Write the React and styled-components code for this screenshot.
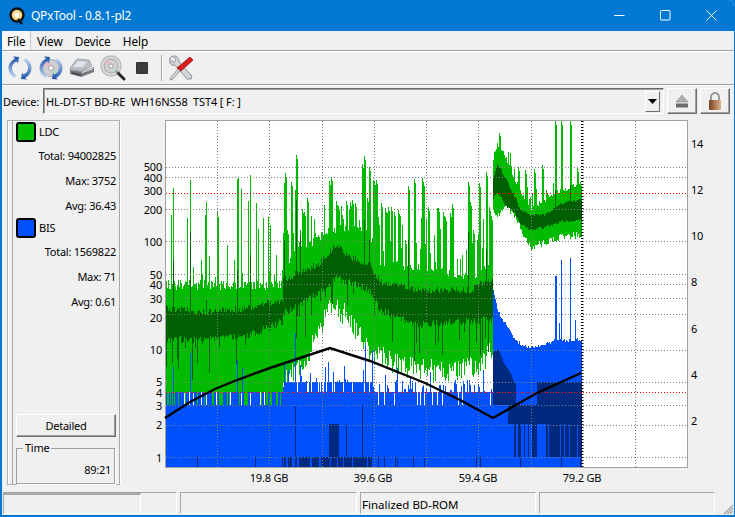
import React from 'react'
import styled, { createGlobalStyle } from 'styled-components'

const UI_FONT = '"Noto Sans", "Open Sans", "Liberation Sans", sans-serif'

const GlobalStyle = createGlobalStyle`
  html, body { margin: 0; padding: 0; background: #0078d4; overflow: hidden; }
  * { box-sizing: border-box; }
`

const Window = styled.div`
  width: 735px;
  height: 517px;
  display: flex;
  flex-direction: column;
  border-style: solid;
  border-color: #0078d4;
  border-width: 0 1px 2px 2px;
  border-top-right-radius: 7px;
  background: #f0f0f0;
  font-family: ${UI_FONT};
  font-size: 11px;
  letter-spacing: -0.25px;
  color: #000;
  overflow: hidden;
`

const TitleBar = styled.div`
  height: 31px;
  margin: 0 -1px 0 -2px;
  flex: none;
  display: flex;
  align-items: center;
  background: #0078d4;
  color: #fff;
  padding-left: 9px;
`

const TitleText = styled.span`
  margin-left: 6px;
  font-size: 12px;
  letter-spacing: -0.25px;
`

const WinButtons = styled.div`
  margin-left: auto;
  margin-right: 1px;
  display: flex;
  height: 100%;
`

const WinButton = styled.div`
  width: 46px;
  display: flex;
  align-items: center;
  justify-content: center;
`

const MenuBar = styled.div`
  height: 20px;
  flex: none;
  display: flex;
  align-items: stretch;
  border-bottom: 1px solid #a0a0a0;
  box-shadow: 0 1px 0 #fff;
`

const MenuItem = styled.div`
  padding: 0 6px 0 ${p => (p.$active ? '5px' : '6px')};
  display: flex;
  align-items: center;
  font-size: 11.8px;
  letter-spacing: -0.05px;
  ${p => p.$active && 'background: #f7f7f7; border-right: 1px solid #c8c8c8; width: 29px;'}
`

const ToolBar = styled.div`
  height: 33px;
  margin-top: 1px;
  flex: none;
  display: flex;
  align-items: center;
  padding-left: 2px;
  border-bottom: 1px solid #a0a0a0;
`

const ToolIcon = styled.div`
  width: ${p => p.$w || 31}px;
  height: 26px;
  flex: none;
  display: flex;
  align-items: center;
  justify-content: center;
`

const ToolSep = styled.div`
  width: 1px;
  height: 26px;
  margin: 0 5px 0 6px;
  background: #a8a8a8;
  box-shadow: 1px 0 0 #fff;
`

const DeviceRow = styled.div`
  height: 35px;
  flex: none;
  display: flex;
  align-items: center;
  padding: 0 2px 3px 1px;
  box-shadow: inset 0 1px 0 #fff;
`

const DeviceLabel = styled.span`
  width: 40px;
  flex: none;
  font-size: 11px;
  letter-spacing: -0.1px;
`

const Combo = styled.div`
  width: 621px;
  height: 26px;
  flex: none;
  display: flex;
  align-items: center;
  justify-content: space-between;
  padding: 0 3px 0 2px;
  border: 1px solid;
  border-color: #6e6e6e #fff #fff #6e6e6e;
  box-shadow: inset 1px 1px 0 #a0a0a0;
  background: #f0f0f0;
  font-size: 11px;
  letter-spacing: -0.13px;
  white-space: pre;
`

const ComboArrow = styled.div`
  width: 15px;
  height: 21px;
  display: flex;
  align-items: center;
  justify-content: center;
  background: #f0f0f0;
  border: 1px solid;
  border-color: #fff #6e6e6e #6e6e6e #fff;
`

const SquareButton = styled.div`
  width: 30px;
  height: 26px;
  margin-left: ${p => p.$gap}px;
  flex: none;
  display: flex;
  align-items: center;
  justify-content: center;
  border: 1px solid;
  border-color: #fff #6e6e6e #6e6e6e #fff;
  box-shadow: inset -1px -1px 0 #a0a0a0;
`

const Main = styled.div`
  flex: 1;
  min-height: 0;
  display: flex;
  padding: 0 0 0 5px;
`

const OuterFrame = styled.div`
  width: 113px;
  height: 365px;
  flex: none;
  padding-left: 4px;
  border: 1px solid #b0b0b0;
  border-right: 0;
  box-shadow: inset 1px 0 0 #fff;
`

const SidePanel = styled.div`
  width: 108px;
  height: 100%;
  display: flex;
  flex-direction: column;
  padding-left: 3px;
  border-left: 1px solid #a8a8a8;
  border-right: 1px solid #a8a8a8;
  box-shadow: 1px 0 0 #fff;
`

const LegendHead = styled.div`
  height: 21px;
  display: flex;
  align-items: center;
  gap: 3px;
`

const Swatch = styled.div`
  width: 20px;
  height: 20px;
  border: 2px solid #000;
  border-radius: 3px;
  background: ${p => p.$color};
`

const StatRow = styled.div`
  height: 25px;
  display: flex;
  align-items: center;
  justify-content: flex-end;
  padding: 1px 3px 0 0;
`

const DetailGroup = styled.div`
  margin-top: auto;
`

const DetailedButton = styled.div`
  width: 100px;
  height: 23px;
  display: flex;
  align-items: center;
  justify-content: center;
  border: 1px solid;
  border-color: #fff #6e6e6e #6e6e6e #fff;
  box-shadow: inset -1px -1px 0 #a0a0a0;
`

const TimeBox = styled.fieldset`
  width: 99px;
  height: 43px;
  margin: 4px 0 0 0;
  padding: 0 3px 0 0;
  display: block;
  border: 1px solid #a0a0a0;
  box-shadow: 1px 1px 0 #fff;
  text-align: right;
  line-height: 16px;
`

const TimeLegend = styled.legend`
  margin-left: 6px;
  padding: 0 2px;
  text-align: left;
  line-height: 14px;
`

const TimeValue = styled.div`
  margin-top: 7px;
`

const ChartHolder = styled.div`
  margin-left: 2px;
  flex: none;
  height: 370px;
`

const StatusBar = styled.div`
  height: 23px;
  margin-top: auto;
  flex: none;
  display: flex;
  gap: 3px;
  padding-left: 1px;
  position: relative;
`

const StatusCell = styled.div`
  width: ${p => p.$w}px;
  height: 22px;
  flex: none;
  display: flex;
  align-items: center;
  padding: 2px 0 0 1px;
  border-top: 1px solid #a8a8a8;
  border-left: 1px solid #a8a8a8;
  border-right: 1px solid #fff;
  border-bottom: 1px solid #fff;
  font-size: 11.5px;
  letter-spacing: 0;
`

const ProgressStrip = styled.div`
  width: 137px;
  height: 21px;
  margin: -2px 0 0 -1px;
  border-top: 2px solid #a8a8a8;
  border-right: 1px solid #fff;
`

const Grip = styled.svg`
  position: absolute;
  right: 0;
  bottom: 0;
`

// ---- chart data, page pixel coordinates read off the graph ----

const lerp = (pts, x) => {
  if (x <= pts[0][0]) return pts[0][1]
  for (let i = 1; i < pts.length; i++) {
    if (x <= pts[i][0]) {
      const [x0, y0] = pts[i - 1]
      const [x1, y1] = pts[i]
      return y0 + ((y1 - y0) * (x - x0)) / (x1 - x0)
    }
  }
  return pts[pts.length - 1][1]
}

const seed = { v: 12345 }
const rnd = () => {
  seed.v = (seed.v * 16807) % 2147483647
  return seed.v / 2147483647
}

const ldcTop = [[166, 284], [280, 284], [283, 262], [320, 236], [340, 228], [370, 232], [378, 262], [420, 266], [470, 276], [492, 266], [493, 158], [497, 143], [505, 155], [513, 175], [520, 190], [530, 208], [540, 202], [560, 190], [581, 184]]
const ldcBottom = [[283, 386], [300, 366], [320, 333], [330, 303], [350, 320], [370, 353], [380, 355], [400, 367], [420, 370], [450, 373], [480, 367], [492, 350], [493, 212], [497, 215], [505, 205], [513, 215], [520, 228], [530, 248], [545, 242], [560, 237], [581, 235]]
const darkTop = [[166, 308], [200, 312], [250, 308], [282, 300], [283, 280], [320, 263], [335, 245], [350, 258], [370, 265], [380, 282], [420, 290], [470, 290], [492, 278], [493, 178], [497, 163], [505, 178], [515, 198], [520, 210], [530, 215], [545, 215], [560, 203], [581, 200]]
const darkBottom = [[166, 340], [200, 340], [250, 335], [282, 322], [283, 313], [320, 293], [335, 278], [350, 282], [370, 292], [380, 310], [420, 325], [470, 320], [492, 320], [493, 198], [497, 192], [505, 205], [515, 214], [520, 223], [530, 230], [545, 227], [560, 222], [581, 220]]
const bisTop = [[166, 392], [282, 392], [284, 382], [372, 382], [374, 392], [492, 392], [493, 290], [497, 310], [503, 320], [510, 332], [515, 340], [525, 347], [545, 345], [555, 340], [581, 340]]

const spikes = [
  [171, 215], [173, 188], [187, 218], [190, 180], [205, 215], [206, 202], [217, 212], [218, 217], [227, 245], [237, 179], [238, 178], [241, 189], [248, 201], [250, 175], [256, 203], [258, 229], [263, 218], [268, 217], [270, 225],
  [284, 183], [285, 173], [287, 230], [291, 182], [296, 155], [295, 190], [302, 209], [304, 212], [307, 198], [315, 233], [329, 181], [331, 177], [336, 201], [338, 206], [342, 215], [346, 201], [350, 202], [352, 200], [355, 203], [362, 164], [364, 156], [367, 198], [369, 167], [373, 180], [374, 181], [376, 180],
  [381, 203], [385, 208], [388, 207], [391, 207], [394, 212], [398, 210], [405, 240], [408, 186], [414, 179], [422, 178], [423, 182], [428, 207], [437, 208], [438, 208], [443, 212], [445, 217], [450, 213], [452, 204], [468, 182], [470, 202], [473, 230], [479, 183], [486, 172], [489, 207], [491, 216],
  [518, 167], [525, 170], [534, 169], [542, 165], [546, 190], [555, 121], [561, 121], [570, 121], [577, 168], [580, 182],
]
const darkSpikes = [[173, 260], [190, 232], [206, 300], [237, 270], [250, 255], [284, 240], [296, 200], [300, 235], [364, 220], [369, 240], [408, 240], [468, 232], [486, 250], [570, 185], [555, 190]]
const blueSpikes = [[173, 367], [190, 353], [237, 360], [242, 368], [284, 363], [288, 370], [295, 333], [300, 365], [328, 362], [365, 345], [372, 350], [385, 375], [397, 368], [410, 378], [430, 372], [455, 380], [483, 370], [555, 276], [556, 276], [559, 323], [561, 260], [570, 258], [575, 320]]
const navyBars = [[296, 457, 467], [284, 457, 467], [329, 424, 457], [330, 424, 457], [331, 424, 457], [332, 424, 457], [333, 424, 457], [334, 424, 457], [335, 424, 457], [336, 424, 457], [337, 424, 457], [338, 424, 457], [295, 405, 457], [362, 405, 457], [346, 424, 457]]

const bar = (x, top, bottom) => (bottom > top ? `M${x} ${top.toFixed(0)}V${bottom.toFixed(0)}` : '')

const buildLayers = () => {
  let green = ''
  let dark = ''
  let blue = ''
  let navy = ''
  const topExtra = new Map()
  // most spikes in the graph are two columns wide
  spikes.forEach(([x, y]) => {
    topExtra.set(x, y)
    if (x > 280 && !topExtra.has(x + 1)) topExtra.set(x + 1, y + 4)
  })
  const darkExtra = new Map(darkSpikes)
  const blueExtra = new Map(blueSpikes)

  for (let x = 166; x <= 581; x++) {
    const x5 = x + 0.5
    const a = lerp(ldcTop, x) + (rnd() - 0.4) * (x < 493 ? 10 : 5)
    let top = a
    if (x < 283 && rnd() < 0.18) top = a - rnd() * 30
    if (x >= 283 && x < 374 && rnd() < 0.22) top = a - rnd() * 28
    if (x >= 374 && x < 493 && rnd() < 0.4) top = a - rnd() * 50
    if (x >= 493 && rnd() < 0.25) top = a - rnd() * 16

    // green ends at the comb on the left, further right it is a jagged band
    const bottom = x < 283
      ? (rnd() < 0.65 ? 405 : 392)
      : lerp(ldcBottom, x) + (rnd() - 0.5) * (x < 493 ? 24 : 7)
    green += bar(x5, topExtra.get(x) ?? top, bottom)

    const dTop = lerp(darkTop, x) + (rnd() - 0.5) * (x < 493 ? 7 : 3)
    const dBottom = lerp(darkBottom, x) + (rnd() - 0.5) * (x < 493 ? 8 : 3) + (x < 493 && rnd() < 0.14 ? rnd() * 40 : 0)
    dark += bar(x5, darkExtra.get(x) ?? dTop, dBottom)

    // blue: solid below 405 on the left, comb up to the red line
    let bTop = lerp(bisTop, x)
    if (x < 284 && rnd() < 0.3) bTop = 405
    if (x >= 284 && x < 493) {
      if (rnd() < 0.15) bTop = x < 374 ? 392 : 405
      else if (rnd() < 0.35) bTop -= rnd() * (x < 374 ? 16 : 12)
      else if (x >= 374 && rnd() < 0.6) bTop = 392
    }
    if (x >= 493) bTop += (rnd() - 0.5) * 4
    blue += bar(x5, blueExtra.get(x) ?? bTop, 467)

    // navy: error clusters behind the layer jump
    if (x >= 493) {
      const nTop = lerp([[493, 352], [498, 349], [503, 362], [510, 373], [514, 382], [533, 405], [536, 405], [537, 382], [581, 382]], x)
      const low = x < 508 ? 405 : 424
      navy += bar(x5, x > 515 && x < 537 ? 405 : nTop, low)
      const density = x > 544 ? 0.85 : 0.6
      if (x >= 513 && (x > 544 || x < 537) && rnd() < density) navy += bar(x5, 424, 457)
    }
    if (x >= 300 && x < 373 && rnd() < 0.95) navy += bar(x5, 457, 467)
    if (x >= 284 && x < 300 && rnd() < 0.5) navy += bar(x5, 457, 467)
    if ((x < 284 || (x >= 373 && x < 581)) && rnd() < 0.035) navy += bar(x5, 457, 467)
  }
  navyBars.forEach(([x, a, b]) => { navy += bar(x + 0.5, a, b) })
  return { green, dark, blue, navy }
}

const layers = buildLayers()

const GRID_Y = [167, 177, 209, 241, 274, 284, 298, 314, 350, 382, 405, 425, 457]
const GRID_X = [217, 269, 322, 374, 426, 478, 531, 583, 635]
const LEFT_LABELS = [[500, 167], [400, 178], [300, 191], [200, 210], [100, 242], [50, 275], [40, 285], [30, 299], [20, 318], [10, 350], [5, 382], [4, 393], [3, 406], [2, 425], [1, 458]]
const RIGHT_LABELS = [[14, 144], [12, 190], [10, 236], [8, 282], [6, 329], [4, 375], [2, 421]]
const BOTTOM_LABELS = [['19.8 GB', 269], ['39.6 GB', 373], ['59.4 GB', 478], ['79.2 GB', 582]]
const BLACK_LINE = 'M165 418L190 402L215 389L237 380L270 368L300 358L330 348L370 361L425 383L460 400L493 418L537 393L581 373'

const AxisText = styled.text`
  font-family: ${UI_FONT};
  font-size: 11px;
  letter-spacing: -0.2px;
  fill: #000;
`

const Chart = () => (
  <svg width="600" height="370" viewBox="122 120 600 370" style={{ display: 'block' }}>
    <rect x="165.500" y="120.500" width="522" height="347" fill="#fff" stroke="#a0a0a0" />
    <g shapeRendering="crispEdges" fill="none" strokeWidth="1">
      <path d={layers.green} stroke="#00bb00" />
      <path d={layers.dark} stroke="#005f00" />
      <path d={layers.blue} stroke="#0050ff" />
      <path d={layers.navy} stroke="#002a80" />
      {GRID_Y.map(y => (
        <path key={y} d={`M166 ${y + 0.5}H687`} stroke="#808080" strokeDasharray="1 2" />
      ))}
      {GRID_X.map(x => (
        <path key={x} d={`M${x + 0.5} 121V467`} stroke="#808080" strokeDasharray="1 2" />
      ))}
      <path d="M166 193.500H687" stroke="#ff0000" strokeDasharray="1 2" />
      <path d="M166 392.500H687" stroke="#ff0000" strokeDasharray="1 2" />
      <path d="M582 121V467" stroke="#000" strokeWidth="2" strokeDasharray="1 2" />
    </g>
    <path d={BLACK_LINE} fill="none" stroke="#000" strokeWidth="2.400" />
    {LEFT_LABELS.map(([v, y]) => (
      <AxisText key={v} x="162" y={y + 4} textAnchor="end">{v}</AxisText>
    ))}
    {RIGHT_LABELS.map(([v, y]) => (
      <AxisText key={v} x="691" y={y + 4}>{v}</AxisText>
    ))}
    {BOTTOM_LABELS.map(([t, x]) => (
      <AxisText key={t} x={x} y="482" textAnchor="middle">{t}</AxisText>
    ))}
  </svg>
)

// ---- icons ----

const AppIcon = () => (
  <svg width="16" height="18" viewBox="0 0 16 18">
    <circle cx="8" cy="8" r="6.500" fill="#f4d98a" stroke="#111" strokeWidth="2.400" />
    <circle cx="8" cy="8" r="2.400" fill="#fff" />
    <path d="M9 12l4 5" stroke="#111" strokeWidth="2.400" />
  </svg>
)

const Arcs = ({ id }) => (
  <>
    <defs>
      <linearGradient id={`${id}L`} x1="0" y1="0" x2="0" y2="1">
        <stop offset="0" stopColor="#1d4fa8" />
        <stop offset="1" stopColor="#c4dbf3" />
      </linearGradient>
      <linearGradient id={`${id}R`} x1="0" y1="0" x2="0" y2="1">
        <stop offset="0" stopColor="#c4dbf3" />
        <stop offset="1" stopColor="#1d4fa8" />
      </linearGradient>
    </defs>
    <path d="M8 3.500C3.500 6 1.500 9.500 1.500 13C1.500 17 3.500 20.500 7.500 23L9.500 20.500C6.500 18.500 5 16 5 13C5 10.500 6.500 8 9.500 6.500L11 8.500L12 2L6 1.500Z" fill={`url(#${id}L)`} />
    <path d="M18 23C22.500 20.500 24.500 17 24.500 13C24.500 9 22.500 5.500 18.500 3L16.500 5.500C19.500 7.500 21 10 21 13C21 15.500 19.500 18 16.500 19.500L15 17.500L14 24L20 24.500Z" fill={`url(#${id}R)`} />
  </>
)

const ReloadIcon = () => (
  <svg width="26" height="26" viewBox="0 0 26 26">
    <Arcs id="arcA" />
  </svg>
)

const Disc = ({ cx, cy, r }) => (
  <>
    <circle cx={cx} cy={cy} r={r} fill="#cfcfd2" stroke="#9a9a9e" strokeWidth="0.800" />
    <path d={`M${cx} ${cy}L${cx - r + 1} ${cy - 3}A${r} ${r} 0 0 1 ${cx - 3} ${cy - r + 1}Z`} fill="#e7b9c9" />
    <path d={`M${cx} ${cy}L${cx + r - 1} ${cy + 3}A${r} ${r} 0 0 1 ${cx + 3} ${cy + r - 1}Z`} fill="#b5dcc0" />
    <circle cx={cx} cy={cy} r={r * 0.3} fill="#f3f3f3" stroke="#8c8c90" strokeWidth="0.700" />
  </>
)

const DiscReloadIcon = () => (
  <svg width="26" height="26" viewBox="0 0 26 26">
    <Disc cx={13} cy={13} r={8.500} />
    <Arcs id="arcB" />
  </svg>
)

const DriveIcon = () => (
  <svg width="26" height="22" viewBox="0 0 26 22">
    <path d="M1 11L8 2L20 3L23 9L12 14L1 13z" fill="#b8bec6" stroke="#8b8f96" strokeWidth="0.600" />
    <path d="M4 10L9 4L18 5L14 10z" fill="#dfe3e7" />
    <path d="M1 13L12 14.500L25 10L25 15L12 20L1 17z" fill="#77797e" />
    <path d="M13 15.500L24 11.500" stroke="#efefef" strokeWidth="1.200" />
    <path d="M3 16L12 18" stroke="#3f4045" strokeWidth="1.400" />
  </svg>
)

const ScanIcon = () => (
  <svg width="26" height="26" viewBox="0 0 26 26">
    <circle cx="11" cy="11" r="10" fill="#dcdcdc" stroke="#bcbcbc" strokeWidth="1.400" />
    <Disc cx={11} cy={11} r={7} />
    <path d="M16 16L19 19" stroke="#9a9a9a" strokeWidth="3" />
    <path d="M18.500 18.500L24 24" stroke="#2a2a2a" strokeWidth="3" strokeLinecap="round" />
  </svg>
)

const StopIcon = () => (
  <svg width="12" height="12" viewBox="0 0 12 12">
    <rect width="12" height="12" rx="1" fill="#333" />
    <rect x="1" y="1" width="10" height="10" fill="#3c3c3c" />
  </svg>
)

const ToolsIcon = () => (
  <svg width="26" height="26" viewBox="0 0 26 26">
    <path d="M5 1C2 2 1 5 2 8C3 10 5 10.500 7 10L19 24L23 24L24 21L11 7C11.500 4 9.500 0.500 5 1L8 5L6 7.500L2.500 5" fill="#d2d5d8" stroke="#8e9296" strokeWidth="1" />
    <path d="M22 2L25 5L13 16L9 13z" fill="#d81c1c" stroke="#a01414" strokeWidth="0.800" />
    <path d="M10 14L3 22L2 25L5 24L12 16z" fill="#d0d4d8" stroke="#8a8e92" strokeWidth="0.800" />
  </svg>
)

const EjectIcon = () => (
  <svg width="14" height="13" viewBox="0 0 14 13">
    <path d="M7 0L13 7H1z" fill="#b0b0b0" stroke="#8a8a8a" strokeWidth="0.600" />
    <rect x="1" y="8.500" width="12" height="4" fill="#6a6a6a" />
  </svg>
)

const LockIcon = () => (
  <svg width="14" height="18" viewBox="0 0 14 18">
    <defs>
      <linearGradient id="lockGrad" x1="0" x2="1" y1="0" y2="0">
        <stop offset="0" stopColor="#7a3d22" />
        <stop offset="1" stopColor="#d8b48c" />
      </linearGradient>
    </defs>
    <path d="M3 8V5a4 4 0 0 1 8 0V8" fill="none" stroke="#9a9a9a" strokeWidth="2" />
    <rect x="1" y="8" width="12" height="10" rx="1" fill="url(#lockGrad)" />
  </svg>
)

const Stat = ({ label, value }) => <StatRow>{label}: {value}</StatRow>

const App = () => (
  <>
    <GlobalStyle />
    <Window>
      <TitleBar>
        <AppIcon />
        <TitleText>QPxTool - 0.8.1-pl2</TitleText>
        <WinButtons>
          <WinButton>
            <svg width="11" height="11" viewBox="0 0 11 11"><path d="M0 5.500H10.500" stroke="#fff" /></svg>
          </WinButton>
          <WinButton>
            <svg width="11" height="11" viewBox="0 0 11 11"><rect x="0.500" y="0.500" width="9.500" height="9.500" rx="1" fill="none" stroke="#fff" /></svg>
          </WinButton>
          <WinButton>
            <svg width="11" height="11" viewBox="0 0 11 11"><path d="M0.500 0.500L10.500 10.500M10.500 0.500L0.500 10.500" stroke="#fff" /></svg>
          </WinButton>
        </WinButtons>
      </TitleBar>

      <MenuBar>
        <MenuItem $active>File</MenuItem>
        <MenuItem>View</MenuItem>
        <MenuItem>Device</MenuItem>
        <MenuItem>Help</MenuItem>
      </MenuBar>

      <ToolBar>
        <ToolIcon><ReloadIcon /></ToolIcon>
        <ToolIcon><DiscReloadIcon /></ToolIcon>
        <ToolIcon><DriveIcon /></ToolIcon>
        <ToolIcon><ScanIcon /></ToolIcon>
        <ToolIcon $w={27}><StopIcon /></ToolIcon>
        <ToolSep />
        <ToolIcon $w={28}><ToolsIcon /></ToolIcon>
      </ToolBar>

      <DeviceRow>
        <DeviceLabel>Device:</DeviceLabel>
        <Combo>
          <span>HL-DT-ST BD-RE  WH16NS58  TST4 [ F: ]</span>
          <ComboArrow>
            <svg width="9" height="5" viewBox="0 0 9 5"><path d="M0 0H9L4.500 5z" fill="#000" /></svg>
          </ComboArrow>
        </Combo>
        <SquareButton $gap={3}><EjectIcon /></SquareButton>
        <SquareButton $gap={3}><LockIcon /></SquareButton>
      </DeviceRow>

      <Main>
        <OuterFrame>
          <SidePanel>
            <LegendHead><Swatch $color="#00c000" />LDC</LegendHead>
            <Stat label="Total" value="94002825" />
            <Stat label="Max" value="3752" />
            <Stat label="Avg" value="36.43" />
            <LegendHead><Swatch $color="#0050ff" />BIS</LegendHead>
            <Stat label="Total" value="1569822" />
            <Stat label="Max" value="71" />
            <Stat label="Avg" value="0.61" />
            <DetailGroup>
              <DetailedButton>Detailed</DetailedButton>
              <TimeBox>
                <TimeLegend>Time</TimeLegend>
                <TimeValue>89:21</TimeValue>
              </TimeBox>
            </DetailGroup>
          </SidePanel>
        </OuterFrame>
        <ChartHolder><Chart /></ChartHolder>
      </Main>

      <StatusBar>
        <StatusCell $w={174}><ProgressStrip /></StatusCell>
        <StatusCell $w={177} />
        <StatusCell $w={176}>Finalized BD-ROM</StatusCell>
        <StatusCell $w={176} />
        <Grip width="12" height="12" viewBox="0 0 12 12">
          <path d="M11 2L2 11M11 5L5 11M11 8L8 11" stroke="#a0a0a0" strokeWidth="1.200" />
        </Grip>
      </StatusBar>
    </Window>
  </>
)

export default App
